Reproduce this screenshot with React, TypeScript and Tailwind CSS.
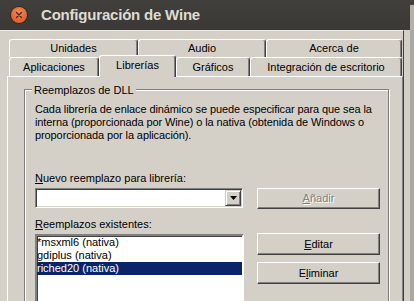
import React from "react";

function Tab({ w, children, h = "h-[18px]" }: { w: string; children: React.ReactNode; h?: string }) {
  return (
    <div
      className={`${w} ${h} shrink-0 flex items-center justify-center border-t border-l border-t-white border-l-white border-r border-r-[#404040] rounded-tl-[3px] rounded-tr-[3px] shadow-[inset_-1px_0_0_#808080] bg-[#d4d0c8]`}
    >
      {children}
    </div>
  );
}

function Button({ children, disabled, h = "h-[22px]", mt }: { children: React.ReactNode; disabled?: boolean; h?: string; mt: string }) {
  return (
    <div
      className={`${mt} ${h} w-[123px] flex items-center justify-center border border-t-white border-l-white border-b-[#404040] border-r-[#404040] shadow-[inset_-1px_-1px_0_#808080] bg-[#d4d0c8] ${
        disabled ? "text-[#808080] [text-shadow:1px_1px_0_#ffffff]" : "text-black"
      }`}
    >
      {children}
    </div>
  );
}

export default function App() {
  return (
    <div className="w-[414px] h-[301px] overflow-hidden flex flex-col bg-[#3c3b37] font-['Liberation_Sans',Arial,sans-serif] text-[11px] leading-[13px] text-black">
      {/* Title bar */}
      <div className="h-[30px] shrink-0 flex items-center bg-gradient-to-b from-[#403f3b] to-[#3a3935]">
        <div className="ml-[11px] w-[16px] h-[16px] rounded-full bg-[radial-gradient(circle_at_50%_35%,#f7895a,#dc4d17)] shadow-[0_0_0_1px_#2a2926] flex items-center justify-center">
          <svg width="8" height="8" viewBox="0 0 8 8">
            <path d="M1.5 1.5 L6.5 6.5 M6.5 1.5 L1.5 6.5" stroke="#4a2a1c" strokeWidth="1.4" strokeLinecap="round" />
          </svg>
        </div>
        <span className="ml-[14px] text-[15px] leading-[18px] font-bold text-[#dfdbd2] tracking-[-0.2px]">
          Configuración de Wine
        </span>
        <div className="flex-1" />
        <div className="w-[4px] h-[25px] self-end bg-[#b5b1a9]" />
      </div>

      {/* Body */}
      <div className="flex flex-1 min-h-0">
        <div className="w-[404px] shrink-0 bg-[#d4d0c8] border-t border-t-[#ebe9e4] border-r border-r-[#404040] pl-[7px] pt-[8px] flex flex-col">
          {/* Tab row 1 */}
          <div className="flex pl-[2px]">
            <Tab w="w-[129px]">Unidades</Tab>
            <Tab w="w-[128px]">Audio</Tab>
            <Tab w="w-[136px]">Acerca de</Tab>
          </div>
          {/* Tab row 2 */}
          <div className="flex items-end h-[19px] pl-[2px]">
            <Tab w="w-[90px]" h="h-[19px]">Aplicaciones</Tab>
            <div className="relative z-10 w-[77px] h-[22px] -mb-[1px] shrink-0 flex items-start justify-center pt-[3px] border-t border-l border-t-white border-l-white border-r border-r-[#404040] rounded-tl-[3px] rounded-tr-[3px] shadow-[inset_-1px_0_0_#808080] bg-[#d4d0c8]">
              Librerías
            </div>
            <Tab w="w-[74px]" h="h-[19px]">Gráficos</Tab>
            <Tab w="w-[152px]" h="h-[19px]">Integración de escritorio</Tab>
          </div>

          {/* Panel */}
          <div className="flex-1 border-t border-l border-t-white border-l-white border-r border-r-[#808080] pl-[16px] pt-[12px]">
            <div className="relative w-[365px] h-[240px] border border-[#808080] shadow-[1px_1px_0_#ffffff,inset_1px_1px_0_#ffffff] pl-[10px] pt-[13px]">
              <div className="absolute left-[7px] -top-[6px] px-[2px] bg-[#d4d0c8]">Reemplazos de DLL</div>
              <div className="whitespace-nowrap tracking-[-0.1px]">
                Cada librería de enlace dinámico se puede especificar para que sea la
                <br />
                interna (proporcionada por Wine) o la nativa (obtenida de Windows o
                <br />
                proporcionada por la aplicación).
              </div>

              <div className="flex mt-[30px]">
                <div className="w-[209px] flex flex-col">
                  <div>
                    <span className="underline underline-offset-[1px]">N</span>uevo reemplazo para librería:
                  </div>
                  <div className="mt-[3px] w-[208px] h-[20px] border border-t-[#808080] border-l-[#808080] border-b-white border-r-white shadow-[inset_1px_1px_0_#404040,inset_-1px_-1px_0_#d4d0c8] bg-white flex justify-end p-[1px]">
                    <div className="w-[16px] h-[16px] border border-t-[#d4d0c8] border-l-[#d4d0c8] border-b-[#404040] border-r-[#404040] shadow-[inset_1px_1px_0_#ffffff,inset_-1px_-1px_0_#808080] bg-[#d4d0c8] flex items-center justify-center">
                      <svg width="7" height="4" viewBox="0 0 7 4">
                        <path d="M0 0 H7 L3.5 4 Z" fill="#000" />
                      </svg>
                    </div>
                  </div>
                  <div className="mt-[10px]">
                    <span className="underline underline-offset-[1px]">R</span>eemplazos existentes:
                  </div>
                  <div className="mt-[3px] w-[209px] h-[80px] border-2 border-t-[#808080] border-l-[#808080] border-b-white border-r-white shadow-[inset_1px_1px_0_#404040] bg-white flex flex-col">
                    <div className="h-[13px] leading-[12px]">*msxml6 (nativa)</div>
                    <div className="h-[13px] leading-[12px]">gdiplus (nativa)</div>
                    <div className="h-[13px] leading-[12px] bg-[#0a246a] text-white">riched20 (nativa)</div>
                  </div>
                </div>
                <div className="ml-[13px] flex flex-col">
                  <Button mt="mt-[16px]" h="h-[21px]" disabled>
                    <span>
                      <span className="underline underline-offset-[1px]">A</span>ñadir
                    </span>
                  </Button>
                  <Button mt="mt-[24px]">
                    <span>
                      <span className="underline underline-offset-[1px]">E</span>ditar
                    </span>
                  </Button>
                  <Button mt="mt-[7px]">
                    <span>
                      E<span className="underline underline-offset-[1px]">l</span>iminar
                    </span>
                  </Button>
                </div>
              </div>
            </div>
          </div>
        </div>
        <div className="w-[6px] bg-[#d4d0c8]" />
        <div className="flex-1 bg-[#aca89f]" />
      </div>
    </div>
  );
}
